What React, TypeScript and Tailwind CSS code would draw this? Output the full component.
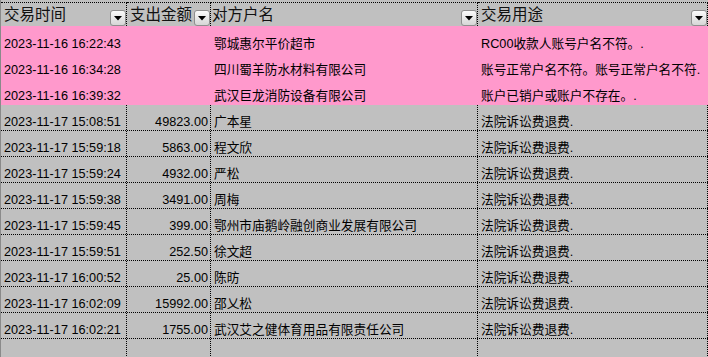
import React from 'react';

interface Row {
  time: string;
  amount: string;
  name: string;
  usage: string;
  flagged?: boolean;
}

const rows: Row[] = [
  { time: '2023-11-16 16:22:43', amount: '', name: '鄂城惠尔平价超市', usage: 'RC00收款人账号户名不符。.', flagged: true },
  { time: '2023-11-16 16:34:28', amount: '', name: '四川蜀羊防水材料有限公司', usage: '账号正常户名不符。账号正常户名不符.', flagged: true },
  { time: '2023-11-16 16:39:32', amount: '', name: '武汉巨龙消防设备有限公司', usage: '账户已销户或账户不存在。.', flagged: true },
  { time: '2023-11-17 15:08:51', amount: '49823.00', name: '广本星', usage: '法院诉讼费退费.' },
  { time: '2023-11-17 15:59:18', amount: '5863.00', name: '程文欣', usage: '法院诉讼费退费.' },
  { time: '2023-11-17 15:59:24', amount: '4932.00', name: '严松', usage: '法院诉讼费退费.' },
  { time: '2023-11-17 15:59:38', amount: '3491.00', name: '周梅', usage: '法院诉讼费退费.' },
  { time: '2023-11-17 15:59:45', amount: '399.00', name: '鄂州市庙鹅岭融创商业发展有限公司', usage: '法院诉讼费退费.' },
  { time: '2023-11-17 15:59:51', amount: '252.50', name: '徐文超', usage: '法院诉讼费退费.' },
  { time: '2023-11-17 16:00:52', amount: '25.00', name: '陈昉', usage: '法院诉讼费退费.' },
  { time: '2023-11-17 16:02:09', amount: '15992.00', name: '邵乂松', usage: '法院诉讼费退费.' },
  { time: '2023-11-17 16:02:21', amount: '1755.00', name: '武汉艾之健体育用品有限责任公司', usage: '法院诉讼费退费.' },
  { time: '', amount: '', name: '', usage: '' },
];

const cols = 'grid grid-cols-[126px_84px_267px_1fr]';

const FilterButton: React.FC = () => (
  <div className="w-[16px] h-[16px] shrink-0 rounded-[3px] border border-[#8e8e8e] bg-gradient-to-b from-[#fbfbfb] to-[#d6d6d6] flex items-center justify-center">
    <svg width="8" height="5" viewBox="0 0 8 5" className="mt-[1px]">
      <path d="M0 0H8L4 4.5Z" fill="#000" />
    </svg>
  </div>
);

const HeaderCell: React.FC<{ label: string; pad: string }> = ({ label, pad }) => (
  <div className={`h-[24px] border-t border-r border-dotted border-black flex items-end justify-between overflow-hidden ${pad}`}>
    <span className="text-[15.5px] leading-[16px] pb-[3px] whitespace-nowrap text-[#111]">{label}</span>
    <FilterButton />
  </div>
);

const App: React.FC = () => {
  const lastFlagged = rows.filter(r => r.flagged).length - 1;

  return (
    <div className="w-[708px] h-[357px] overflow-hidden bg-[#c0c0c0] border-l border-[#8a8a8a] font-['Liberation_Sans','Noto_Sans_CJK_SC',sans-serif] text-black">
      {/* Header */}
      <div className={`${cols} pt-[2px]`}>
        <HeaderCell label="交易时间" pad="pl-[3px]" />
        <HeaderCell label="支出金额" pad="pl-[3px]" />
        <HeaderCell label="对方户名" pad="pl-[1px]" />
        <HeaderCell label="交易用途" pad="pl-[3px]" />
      </div>

      {rows.map((r, i) => {
        const flagged = !!r.flagged;
        const rowCls = flagged
          ? i === lastFlagged
            ? 'h-[27px] bg-[#ff99cc] border-b border-transparent'
            : 'h-[26px] bg-[#ff99cc]'
          : 'h-[26px] border-b border-dotted border-black';
        const cellCls = `flex items-end overflow-hidden whitespace-nowrap text-[12.7px] leading-[15px] border-r ${flagged ? 'border-transparent' : 'border-dotted border-black'}`;
        return (
          <div key={i} className={`${cols} ${rowCls}`}>
            <div className={`${cellCls} pl-[3px]`}>{r.time}</div>
            <div className={`${cellCls} justify-end pr-[2px]`}>{r.amount}</div>
            <div className={`${cellCls} pl-[3px]`}>{r.name}</div>
            <div className={`${cellCls} pl-[3px]`}>{r.usage}</div>
          </div>
        );
      })}
    </div>
  );
};

export default App;
